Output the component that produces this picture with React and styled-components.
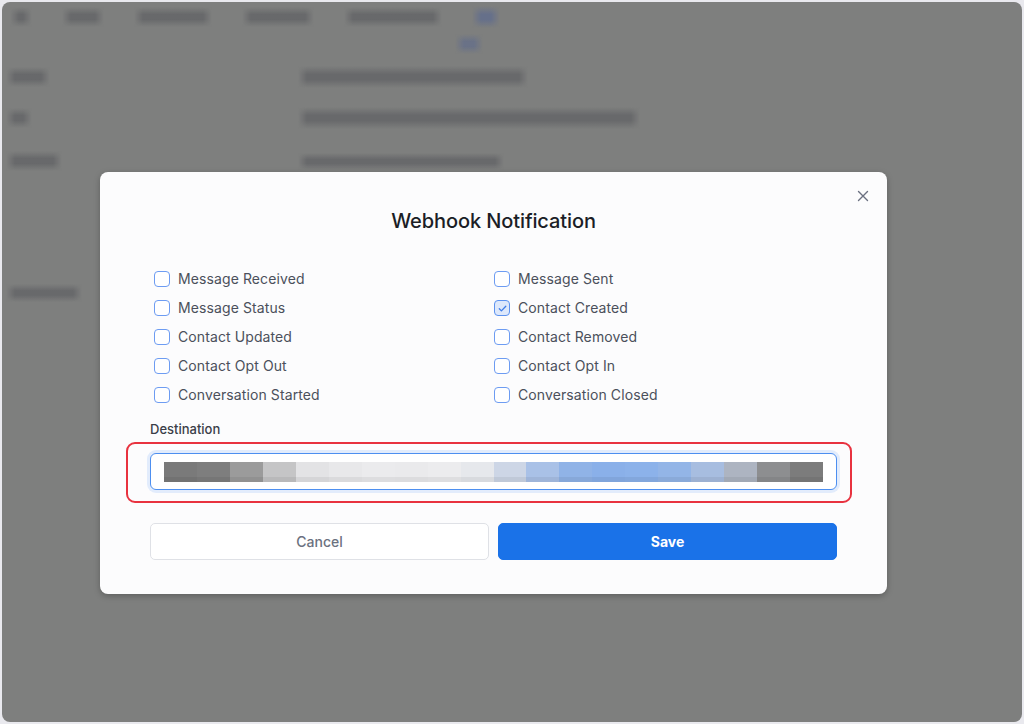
import React from 'react'
import styled, { createGlobalStyle } from 'styled-components'

const GlobalStyle = createGlobalStyle`
  html, body {
    margin: 0;
    padding: 0;
    background: #e9e9ee;
    font-family: Inter, "Noto Sans", sans-serif;
  }
  * { box-sizing: border-box; }
`

const Frame = styled.div`
  padding: 2px;
  width: 1024px;
  height: 724px;
`

const Screen = styled.div`
  position: relative;
  width: 100%;
  height: 100%;
  background: #7e7f7e;
  border-radius: 8px;
  overflow: hidden;
`

const Backdrop = styled.div`
  display: flex;
  flex-direction: column;
  padding: 8px 0 0 4px;
`

const Tabs = styled.div`
  display: flex;
  align-items: center;
  gap: 30px;
  height: 14px;
  margin-left: 4px;
`

// soft, smeared leftovers of the page under the overlay
const Blob = styled.div`
  flex: none;
  width: ${p => p.$w}px;
  height: ${p => (p.$h || 10) + 10}px;
  margin-left: ${p => p.$ml || 0}px;
  background: linear-gradient(
    to bottom,
    transparent,
    ${p => p.$c || '#68696b'} 38%,
    ${p => p.$c || '#68696b'} 62%,
    transparent
  );
  mask-image: linear-gradient(to right, transparent, #000 9px, #000 calc(100% - 9px), transparent);
  -webkit-mask-image: linear-gradient(to right, transparent, #000 9px, #000 calc(100% - 9px), transparent);
`

const Field = styled.div`
  display: grid;
  grid-template-columns: 292px 1fr;
  align-items: center;
  height: ${p => p.$h}px;
`

const Modal = styled.div`
  position: absolute;
  left: 98px;
  top: 170px;
  width: 787px;
  height: 422px;
  background: #fcfcfd;
  border-radius: 8px;
  box-shadow: 0 2px 6px rgba(0, 0, 0, 0.25);
  padding: 37px 50px 0 50px;
  display: flex;
  flex-direction: column;
`

const Close = styled.button`
  position: absolute;
  top: 14px;
  right: 14px;
  width: 20px;
  height: 20px;
  border: none;
  background: none;
  padding: 0;
  display: flex;
  align-items: center;
  justify-content: center;
  color: #6b7080;
  cursor: pointer;
`

const Title = styled.h2`
  margin: 0;
  text-align: center;
  font-size: 20px;
  font-weight: 500;
  color: #1b1e26;
  letter-spacing: -0.1px;
`

const Grid = styled.div`
  display: grid;
  grid-template-columns: 340px 1fr;
  row-gap: 13px;
  margin-top: 38px;
  padding-left: 4px;
`

const Option = styled.label`
  display: flex;
  align-items: center;
  gap: 8px;
  font-size: 14px;
  color: #4b505b;
  line-height: 16px;
  letter-spacing: 0.1px;
`

const Box = styled.span`
  width: 16px;
  height: 16px;
  border-radius: 4px;
  border: 1.3px solid ${p => (p.$on ? '#5d93ef' : '#6d9cf2')};
  background: ${p => (p.$on ? '#dde8fb' : '#fff')};
  display: flex;
  align-items: center;
  justify-content: center;
`

const Label = styled.div`
  margin-top: 18px;
  font-size: 13px;
  font-weight: 500;
  color: #3a3e48;
`

const Highlight = styled.div`
  margin: 5px -15px 0 -24px;
  padding: 9px 13px 11px 22px;
  border: 2px solid #e8323f;
  border-radius: 9px;
`

const Input = styled.div`
  height: 37px;
  border: 1px solid #4d8ff0;
  border-radius: 6px;
  background: #fff;
  box-shadow: 0 0 0 3px #e2ecfc;
  display: flex;
  align-items: center;
  padding: 0 13px;
`

const Mosaic = styled.div`
  display: flex;
  width: 100%;
  height: 20px;
  margin-top: 1px;
`

const Cell = styled.div`
  flex: 1;
  background: ${p => p.$c};
  box-shadow: inset 0 -5px 0 rgba(0, 0, 0, 0.06);
`

const Actions = styled.div`
  display: grid;
  grid-template-columns: 1fr 1fr;
  gap: 9px;
  margin-top: 20px;
`

const Button = styled.button`
  height: 37px;
  border-radius: 5px;
  font-family: inherit;
  font-size: 14px;
  font-weight: ${p => (p.$primary ? 700 : 500)};
  border: 1px solid ${p => (p.$primary ? '#1a72e8' : '#dfe1e6')};
  background: ${p => (p.$primary ? '#1a72e8' : '#fff')};
  color: ${p => (p.$primary ? '#fff' : '#6b7180')};
  cursor: pointer;
`

const options = [
  ['Message Received', false],
  ['Message Sent', false],
  ['Message Status', false],
  ['Contact Created', true],
  ['Contact Updated', false],
  ['Contact Removed', false],
  ['Contact Opt Out', false],
  ['Contact Opt In', false],
  ['Conversation Started', false],
  ['Conversation Closed', false],
]

const cells = [
  '#7a7a7a', '#7e7e7e', '#9b9b9b', '#c5c5c6', '#e3e3e5', '#e8e8ea', '#ebebed',
  '#eaeaec', '#ececee', '#e6e8ec', '#cdd6e6', '#a9c1e7', '#90b3e7', '#8ab0e9',
  '#8cb2ea', '#93b5e7', '#a7bde0', '#adb4c1', '#8d8e90', '#7c7c7c',
]

const Check = ({ on }) => (
  <Box $on={on}>
    {on && (
      <svg width="11" height="11" viewBox="0 0 12 12" fill="none">
        <path d="M2.5 6.3l2.3 2.3L9.6 3.6" stroke="#3f7ee8" strokeWidth="1.4" strokeLinecap="round" strokeLinejoin="round" />
      </svg>
    )}
  </Box>
)

export default function App() {
  return (
    <Frame>
      <GlobalStyle />
      <Screen>
        <Backdrop>
          <Tabs>
            <Blob $w={22} />
            <Blob $w={42} />
            <Blob $w={78} />
            <Blob $w={72} />
            <Blob $w={98} />
            <Blob $w={28} $h={12} $c="#66708a" />
          </Tabs>
          <Blob $w={28} $h={10} $c="#6a7287" $ml={449} style={{ marginTop: 10 }} />
          <Field $h={45}>
            <Blob $w={44} />
            <Blob $w={230} $h={12} />
          </Field>
          <Field $h={38}>
            <Blob $w={26} />
            <Blob $w={342} $h={12} />
          </Field>
          <Field $h={48}>
            <Blob $w={56} />
            <Blob $w={206} $h={7} />
          </Field>
          <Field $h={84} />
          <Field $h={48}>
            <Blob $w={76} $h={8} />
          </Field>
        </Backdrop>

        <Modal>
          <Close aria-label="Close">
            <svg width="12" height="12" viewBox="0 0 12 12">
              <path d="M1.5 1.5l9 9M10.5 1.5l-9 9" stroke="currentColor" strokeWidth="1.4" strokeLinecap="round" />
            </svg>
          </Close>
          <Title>Webhook Notification</Title>
          <Grid>
            {options.map(([text, on]) => (
              <Option key={text}>
                <Check on={on} />
                {text}
              </Option>
            ))}
          </Grid>
          <Label>Destination</Label>
          <Highlight>
            <Input>
              <Mosaic>
                {cells.map((c, i) => (
                  <Cell key={i} $c={c} />
                ))}
              </Mosaic>
            </Input>
          </Highlight>
          <Actions>
            <Button>Cancel</Button>
            <Button $primary>Save</Button>
          </Actions>
        </Modal>
      </Screen>
    </Frame>
  )
}
